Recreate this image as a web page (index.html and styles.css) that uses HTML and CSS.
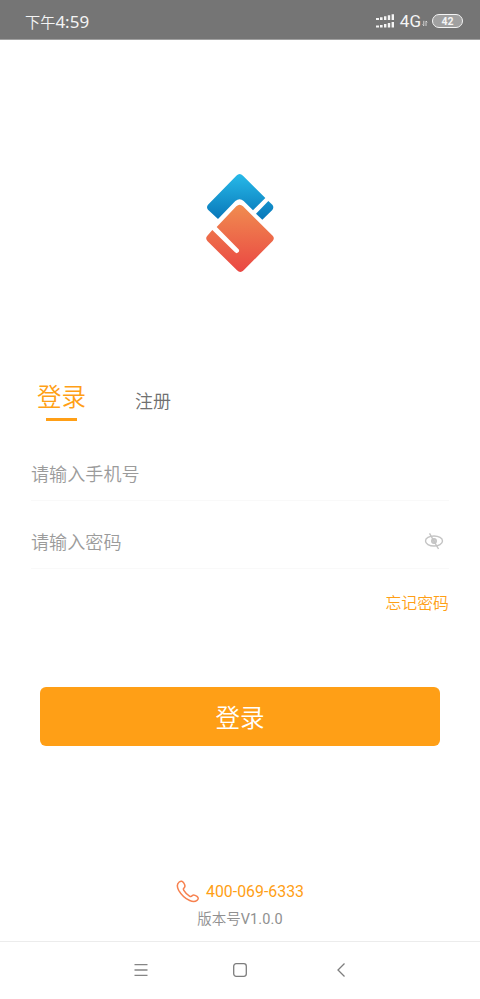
FILE: index.html
```html
<!DOCTYPE html>
<html lang="zh-CN">
<head>
<meta charset="utf-8">
<meta name="viewport" content="width=device-width, initial-scale=1">
<title>登录</title>
<link rel="stylesheet" href="styles.css">
</head>
<body>
<header class="status">
  <span class="time">下午<span class="clock">4:59</span></span>
  <div class="status-right">
    <svg class="signal" width="19" height="14" viewBox="0 0 19 14" fill="#f4f4f4">
      <path d="M0 4h3v2H0zM4 3.3h2.6V6H4zM8 2.3h2.4V6H8zM11.8 1.3h2.4V6h-2.4zM15.6.2H18V6h-2.4zM0 11.5h3v2H0zM4 11h2.6v2.5H4zM8 10h2.4v3.5H8zM11.8 9h2.4v4.5h-2.4zM15.6 8H18v5.500h-2.400z"/>
    </svg>
    <span class="network">4G</span>
    <svg class="arrows" width="6" height="7" viewBox="0 0 6 7" fill="none" stroke="#e8e8e8" stroke-width=".8"><path d="M1.800.8v5L.5 4.500M4 6V1l1.300 1.300"/></svg>
    <span class="battery">42</span>
  </div>
</header>
<main class="screen">
  <svg class="logo" width="90" height="115" viewBox="0 0 270 345">
    <defs>
      <linearGradient id="blue" gradientUnits="userSpaceOnUse" x1="0" y1="28" x2="0" y2="162"><stop offset="0" stop-color="#27b9e8"/><stop offset="1" stop-color="#0877b9"/></linearGradient>
      <linearGradient id="orange" gradientUnits="userSpaceOnUse" x1="0" y1="120" x2="0" y2="321"><stop offset="0" stop-color="#f08c50"/><stop offset="1" stop-color="#ea4743"/></linearGradient>
    </defs>
    <path fill="url(#blue)" d="M124 32Q134 22 144 32L211 99L174 136L146 108Q134 97 121 108L69 162L39 134Q33 127 39 119ZM220 108L232 119Q238 127 232 135L202 164L183 146Z"/>
    <path fill="url(#orange)" d="M124 124Q134 114 144 124L233 212Q240 220 233 228L146 316Q136 326 126 316L37 228Q30 220 37 212L52 195L120 262Q125 267 130 262Q135 257 130 252L65 186Z"/>
  </svg>
  <nav class="tabs">
    <a class="tab active">登录</a>
    <a class="tab">注册</a>
  </nav>
  <form class="form">
    <label class="field"><span>请输入手机号</span></label>
    <label class="field"><span>请输入密码</span>
      <svg class="eye" width="20" height="18" viewBox="0 0 20 18" fill="none" stroke="#c4c4c4" stroke-width="1.400"><ellipse cx="10" cy="9" rx="8.500" ry="5"/><circle cx="10" cy="9" r="2.300" fill="#d0d0d0"/><path d="M5.500 1.300L14.500 17"/></svg>
    </label>
    <a class="forgot">忘记密码</a>
    <button class="submit" type="button">登录</button>
  </form>
  <footer class="contact">
    <div class="phone">
      <svg width="24" height="24" viewBox="0 0 24 24" fill="none" stroke="#f7814f" stroke-width="1.500" stroke-linejoin="round"><path d="M3.200 2C5.200.6 6.600 1.200 7.700 2.900C9 5 9.800 6.300 8.300 7.600C7.200 8.400 7 9 7.800 10.300C9.200 12.600 11.200 14.600 13.500 16.100C14.800 17 15.500 16.600 16.400 15.500C17.600 14.200 19 15 21 16.400C22.700 17.700 22.500 19.200 21 20.400C19 22 16.500 21.800 13.700 20.500C9.200 18.500 5.200 14.600 2.700 10.300C1 7.100.8 3.900 3.200 2Z"/></svg>
      <span>400-069-6333</span>
    </div>
    <p class="version">版本号<span>V1.0.0</span></p>
  </footer>
</main>
<nav class="system">
  <svg width="14" height="14" viewBox="0 0 14 14" stroke="#858585" stroke-width="1.300"><path d="M.5 1.700h13M.5 7h13M.5 12.300h13"/></svg>
  <svg width="16" height="16" viewBox="0 0 16 16" fill="none" stroke="#7d7d7d" stroke-width="1.300"><rect x="1.700" y="1.700" width="12.600" height="12.600" rx="2.500"/></svg>
  <svg width="14" height="16" viewBox="0 0 14 16" fill="none" stroke="#7d7d7d" stroke-width="1.300"><path d="M10.500 1.500L4 8l6.500 6.500"/></svg>
</nav>
</body>
</html>
```
FILE: styles.css
```css
* { box-sizing: border-box; }
body {
  margin: 0;
  height: 999px;
  display: flex;
  flex-direction: column;
  background: #fff;
  font-family: Roboto, "Noto Sans CJK SC", sans-serif;
  font-weight: 350;
}
svg { display: block; flex: none; }
.status {
  height: 40px;
  padding: 3px 17px 0 25px;
  display: flex;
  align-items: center;
  justify-content: space-between;
  background: #757575;
  border-bottom: 1px solid #a0a0a0;
  color: #f4f4f4;
}
.time { font-family: "Noto Sans", "Noto Sans CJK SC", sans-serif; font-size: 15.200px; line-height: 24px; padding-top: 1px; }
.clock { font-size: 17px; font-weight: 400; }
.status-right { display: flex; align-items: center; }
.network { margin-left: 4px; font: 400 17px/20px Roboto, sans-serif; }
.arrows { margin: 5px 4px 0 1px; }
.battery {
  width: 31px;
  height: 14px;
  border: 1.500px solid #f4f4f4;
  border-radius: 7px;
  background: #a0a0a0;
  font: 700 10.500px/13px Roboto, sans-serif;
  text-align: center;
}
.signal { margin-right: 1px; }
.screen { flex: 1; display: flex; flex-direction: column; }
.logo { margin: 125px 0 0 195px; }
.tabs { display: flex; align-items: flex-start; gap: 49px; height: 43px; margin: 100px 0 0 37px; }
.tab { font-size: 18px; line-height: 26px; padding-top: 9px; color: #707070; }
.tab.active { font-size: 24.500px; line-height: 36px; padding: 0; color: #ff9f16; }
.tab.active::after { content: ""; display: block; width: 31px; height: 3px; margin: 2px auto 0; background: #ff9f16; }
.form { margin: 10px 31px 0; display: flex; flex-direction: column; }
.field {
  height: 68px;
  padding: 13px 5px 0 0;
  display: flex;
  align-items: center;
  justify-content: space-between;
  border-bottom: 1px solid #f9f9f9;
  font-size: 18.100px;
  color: #9b9b9b;
}
.forgot { align-self: flex-end; margin-top: 23px; font-size: 15.900px; line-height: 24px; color: #ff9f16; }
.submit {
  height: 59px;
  margin: 71px 9px 0;
  padding: 0;
  border: 0;
  border-radius: 6px;
  background: #ff9f16;
  color: #fff;
  font: inherit;
  font-size: 24.500px;
}
.contact { margin-top: 132px; display: flex; flex-direction: column; align-items: center; }
.phone { display: flex; align-items: center; gap: 6px; font-size: 15.900px; font-weight: 400; line-height: 27px; color: #ff9f16; }
.version { margin: 5px 0 0; font-size: 14.500px; line-height: 20px; color: #909090; }
.version span { font-weight: 400; letter-spacing: .1px; }
.system {
  height: 58px;
  padding: 0 132px 1px 134px;
  display: flex;
  align-items: center;
  justify-content: space-between;
  border-top: 1px solid #ececec;
}
.system svg:nth-child(2) { margin: 0 1px 0 -1px; }
```
